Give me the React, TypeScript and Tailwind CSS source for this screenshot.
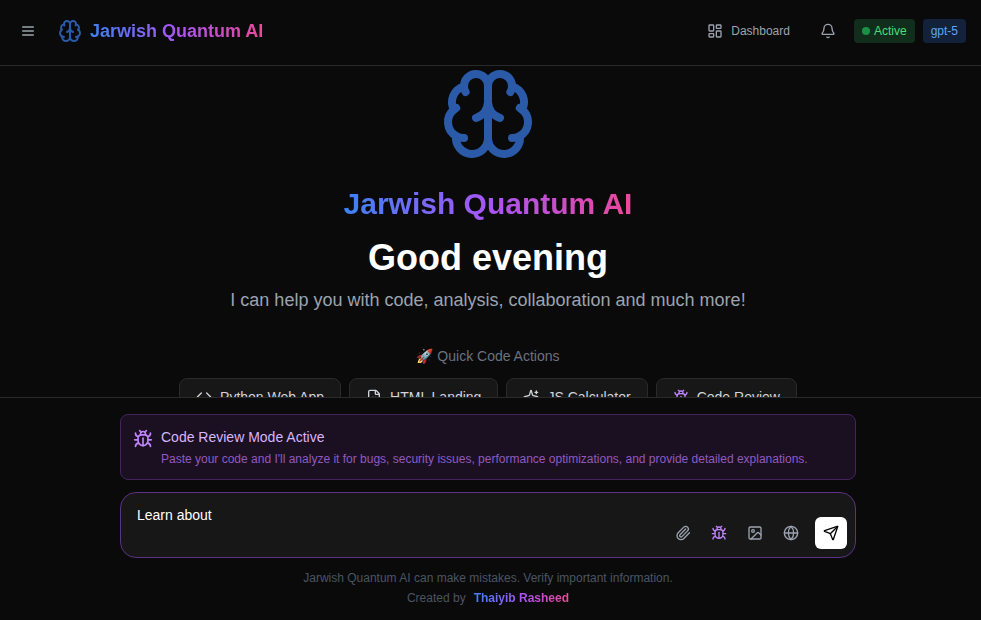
import { useState } from "react";
import type { ReactNode } from "react";
import { Bell, Code, FileCode, Globe, Image, LayoutDashboard, Paperclip, Send } from "lucide-react";

const GRADIENT = "bg-linear-to-r/srgb from-[#3b82f6] via-[#a855f7] to-[#ec4899] bg-clip-text text-transparent";

const Icon = ({ className, children }: { className: string; children: ReactNode }) => (
  <svg
    className={`shrink-0 ${className}`}
    viewBox="0 0 24 24"
    fill="none"
    stroke="currentColor"
    strokeWidth="2"
    strokeLinecap="round"
    strokeLinejoin="round"
    aria-hidden="true"
  >
    {children}
  </svg>
);

const MenuIcon = ({ className = "w-4 h-4" }: { className?: string }) => (
  <Icon className={className}>
    <path d="M4 6h16" />
    <path d="M4 12h16" />
    <path d="M4 18h16" />
  </Icon>
);

const Brain = ({ className = "w-6 h-6" }: { className?: string }) => (
  <Icon className={className}>
    <path d="M12 5a3 3 0 1 0-5.997.125 4 4 0 0 0-2.526 5.77 4 4 0 0 0 .556 6.588A4 4 0 1 0 12 18Z" />
    <path d="M12 5a3 3 0 1 1 5.997.125 4 4 0 0 1 2.526 5.77 4 4 0 0 1-.556 6.588A4 4 0 1 1 12 18Z" />
    <path d="M15 13a4.5 4.5 0 0 1-3-4 4.5 4.5 0 0 1-3 4" />
    <path d="M17.599 6.5a3 3 0 0 0 .399-1.375" />
    <path d="M6.003 5.125A3 3 0 0 0 6.401 6.5" />
    <path d="M3.477 10.896a4 4 0 0 1 .585-.396" />
    <path d="M19.938 10.5a4 4 0 0 1 .585.396" />
    <path d="M6 18a4 4 0 0 1-1.967-.516" />
    <path d="M19.967 17.484A4 4 0 0 1 18 18" />
  </Icon>
);

const Bug = ({ className = "w-4 h-4" }: { className?: string }) => (
  <Icon className={className}>
    <path d="m8 2 1.88 1.88" />
    <path d="M14.12 3.88 16 2" />
    <path d="M9 7.13v-1a3.003 3.003 0 1 1 6 0v1" />
    <path d="M12 20c-3.3 0-6-2.7-6-6v-3a4 4 0 0 1 4-4h4a4 4 0 0 1 4 4v3c0 3.3-2.7 6-6 6" />
    <path d="M12 20v-9" />
    <path d="M6.53 9C4.6 8.8 3 7.1 3 5" />
    <path d="M6 13H2" />
    <path d="M3 21c0-2.1 1.7-3.9 3.8-4" />
    <path d="M20.97 5c0 2.1-1.6 3.8-3.5 4" />
    <path d="M22 13h-4" />
    <path d="M17.2 17c2.1.1 3.8 1.9 3.8 4" />
  </Icon>
);

const Sparkle = ({ className = "w-4 h-4" }: { className?: string }) => (
  <Icon className={className}>
    <path d="M9.937 15.5A2 2 0 0 0 8.5 14.063l-6.135-1.582a.5.5 0 0 1 0-.962L8.5 9.936A2 2 0 0 0 9.937 8.5l1.582-6.135a.5.5 0 0 1 .963 0L14.063 8.5A2 2 0 0 0 15.5 9.937l6.135 1.581a.5.5 0 0 1 0 .964L15.5 14.063a2 2 0 0 0-1.437 1.437l-1.582 6.135a.5.5 0 0 1-.963 0z" />
    <path d="M20 3v4" />
    <path d="M22 5h-4" />
    <path d="M4 17v2" />
    <path d="M5 18H3" />
  </Icon>
);

const quickActions = [
  { label: "Python Web App", icon: <Code size={16} /> },
  { label: "HTML Landing", icon: <FileCode size={16} /> },
  { label: "JS Calculator", icon: <Sparkle /> },
  { label: "Code Review", icon: <Bug className="w-4 h-4 text-[#c084fc]" /> },
];

const ToolButton = ({ label, active, children }: { label: string; active?: boolean; children: ReactNode }) => (
  <button
    type="button"
    aria-label={label}
    className={`w-8 h-8 flex items-center justify-center rounded-md ${active ? "text-[#c084fc]" : "text-[#9ca3af]"}`}
  >
    {children}
  </button>
);

export default function App() {
  const [message, setMessage] = useState("Learn about");

  return (
    <div className="h-screen flex flex-col overflow-hidden bg-[#0a0a0a] text-white font-['Liberation_Sans',Arial,sans-serif]">
      <header className="shrink-0 flex items-center justify-between border-b border-[#2a2a2a] pl-3 pr-[15px] pt-[15px] pb-[18px]">
        <div className="flex items-center gap-[14px]">
          <button type="button" aria-label="Open menu" className="w-8 h-8 flex items-center justify-center text-[#9ca3af]">
            <MenuIcon />
          </button>
          <div className="flex items-center gap-2">
            <Brain className="w-6 h-6 text-[#2b5ba8]" />
            <span className={`text-lg font-bold ${GRADIENT}`}>Jarwish Quantum AI</span>
          </div>
        </div>

        <div className="flex items-center gap-2">
          <a href="#dashboard" className="flex items-center gap-2 px-3 text-xs text-[#9ca3af]">
            <LayoutDashboard size={16} />
            Dashboard
          </a>
          <button type="button" aria-label="Notifications" className="w-9 h-8 flex items-center justify-center text-[#9ca3af]">
            <Bell size={16} />
          </button>
          <span className="flex items-center gap-1 rounded bg-[#112d1b] px-2 py-1 text-xs text-[#4ade80]">
            <span className="w-2 h-2 rounded-full bg-[#1c9145]" />
            Active
          </span>
          <span className="rounded bg-[#13213a] px-2 py-1 text-xs text-[#60a5fa]">gpt-5</span>
        </div>
      </header>

      <main className="flex-1 min-h-0 overflow-y-auto [scrollbar-width:none] pr-[5px]">
        <div className="flex flex-col items-center text-center px-4">
          <Brain className="w-24 h-24 text-[#2b5ba8]" />
          <h1 className={`mt-6 text-3xl font-bold ${GRADIENT}`}>Jarwish Quantum AI</h1>
          <h2 className="mt-4 text-4xl font-bold">Good evening</h2>
          <p className="mt-2 text-lg text-[#9ca3af]">
            I can help you with code, analysis, collaboration and much more!
          </p>
          <p className="mt-8 text-sm text-[#6b7280]">🚀 Quick Code Actions</p>
          <div className="mt-3 flex flex-wrap justify-center gap-2">
            {quickActions.map((a) => (
              <button
                key={a.label}
                type="button"
                className="flex items-center gap-2 rounded-lg border border-[#2a2a2a] bg-[#171717] px-4 py-2 text-sm text-[#d1d5db]"
              >
                {a.icon}
                {a.label}
              </button>
            ))}
          </div>
        </div>
      </main>

      <footer className="shrink-0 border-t border-[#2a2a2a] pl-4 pr-[21px] pt-4 pb-[14px]">
        <div className="max-w-[736px] mx-auto">
          <div className="flex gap-2 rounded-lg border border-[#43245f] bg-[#1b1021] p-3">
            <Bug className="w-5 h-5 mt-[2px] text-[#c084fc]" />
            <div>
              <p className="text-sm text-[#d8b4fe]">Code Review Mode Active</p>
              <p className="mt-1 text-xs text-[#9259c0]">
                Paste your code and I'll analyze it for bugs, security issues, performance optimizations, and provide
                detailed explanations.
              </p>
            </div>
          </div>

          <form
            className="mt-3 flex items-end rounded-2xl border border-[#5d3186] bg-[#171717] p-2"
            onSubmit={(e) => e.preventDefault()}
          >
            <textarea
              aria-label="Message"
              value={message}
              onChange={(e) => setMessage(e.target.value)}
              className="flex-1 h-12 resize-none bg-transparent px-2 py-1 text-sm text-white outline-none"
            />
            <div className="flex items-center gap-1">
              <ToolButton label="Attach file">
                <Paperclip size={16} />
              </ToolButton>
              <ToolButton label="Code review" active>
                <Bug />
              </ToolButton>
              <ToolButton label="Add image">
                <Image size={16} />
              </ToolButton>
              <ToolButton label="Search the web">
                <Globe size={16} />
              </ToolButton>
              <button
                type="submit"
                aria-label="Send"
                className="ml-1 w-8 h-8 flex items-center justify-center rounded-md bg-white text-black"
              >
                <Send size={16} />
              </button>
            </div>
          </form>

          <div className="mt-3 flex flex-col items-center gap-1 text-center text-xs text-[#4b5563]">
            <p>Jarwish Quantum AI can make mistakes. Verify important information.</p>
            <p className="flex gap-2">
              Created by
              <span className={`font-bold ${GRADIENT}`}>Thaiyib Rasheed</span>
            </p>
          </div>
        </div>
      </footer>
    </div>
  );
}
